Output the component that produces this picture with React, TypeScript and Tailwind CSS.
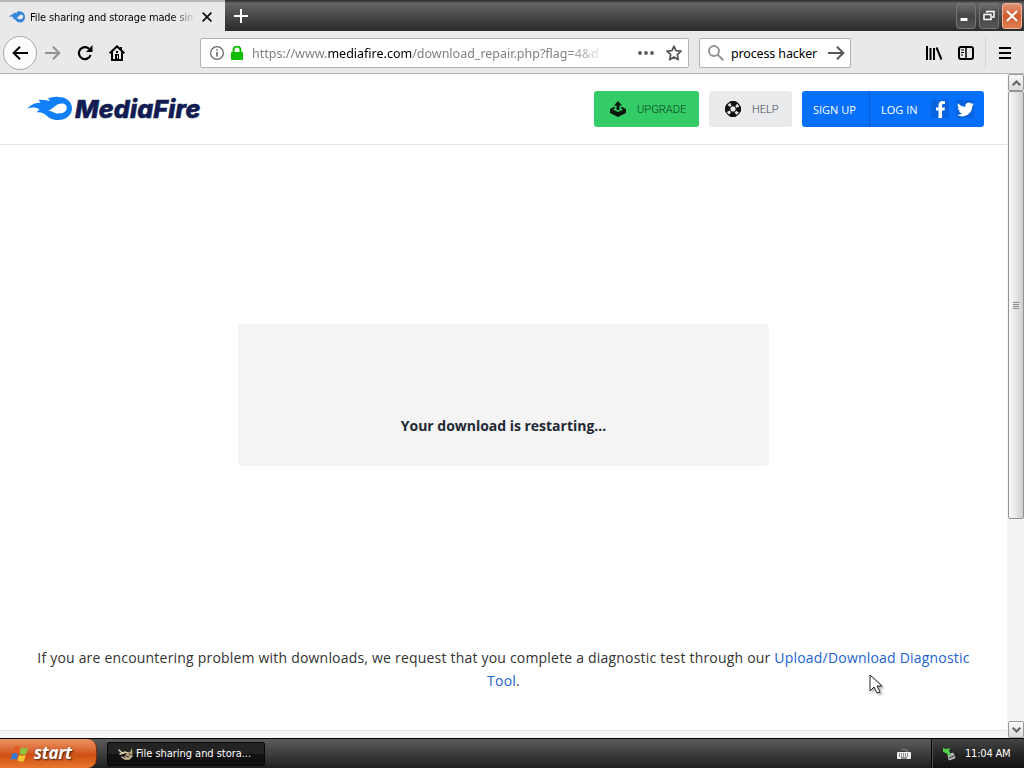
import type { ReactNode } from 'react'

const TAHOMA = "font-['DejaVu_Sans_Condensed','DejaVu_Sans',sans-serif]"
const OPEN = "font-['Open_Sans',sans-serif]"

function Flame({ className }: { className: string }) {
  return (
    <svg viewBox="0 0 43 26" preserveAspectRatio="none" className={className}>
      <path
        fill="currentColor"
        fillRule="evenodd"
        d="M0 13C5 8 9 7 13 7L11 4C17 4 20 5 22 5L20 2C24 2 26 0 30 1C38 1 43 6 43 13C43 20 37 25 30 25C23 25 20 22 17 19C14 17 12 17 9 17L12 14C8 11 4 12 0 13ZM20 15C24 15 26 19 31 18C35 18 38 16 38 12C38 9 35 7 32 8C27 8 25 14 20 15Z"
      />
    </svg>
  )
}

function WindowButton({ close, children }: { close?: boolean; children: ReactNode }) {
  return (
    <div
      className={`flex h-[26px] w-5 items-center justify-center rounded-[3px] border ${
        close
          ? 'border-[#efb49a] bg-linear-to-b from-[#df9778] via-[#cf5a2c] to-[#df8052]'
          : 'border-[#77736f] bg-linear-to-b from-[#6e6e6e] via-[#454545] to-[#555]'
      }`}
    >
      <svg viewBox="0 0 18 24" className="h-6 w-[18px]" fill="none" stroke="#fff" strokeWidth="2">
        {children}
      </svg>
    </div>
  )
}

function TabStrip() {
  return (
    <div className="flex h-[31px] items-start bg-linear-to-b from-[#2a2a2a] from-0% via-[#646464] via-10% to-[#2c2a2a]">
      <div className="flex h-[31px] w-[225px] shrink-0 items-center border-t-2 border-t-[#b5b5b5] bg-[#e9e9e9] pl-[9px]">
        <Flame className="h-[12px] w-4 text-[#3486d6]" />
        <div className="ml-[5px] mt-[-2px] w-[165px] mask-r-from-86% mask-r-to-100%">
          <span className="whitespace-nowrap text-[11px] tracking-[-0.13px] text-black">File sharing and storage made sim</span>
        </div>
        <svg viewBox="0 0 10 10" className="ml-[7px] h-[10px] w-[10px]" stroke="#111" strokeWidth="1.8">
          <path d="M.6.6l8.800 8.800M9.400.6L.6 9.400" />
        </svg>
      </div>
      <svg viewBox="0 0 14 14" className="ml-[9px] mt-[9px] size-[14px]" stroke="#fff" strokeWidth="2">
        <path d="M7 0v14M0 7h14" />
      </svg>
      <div className="ml-auto mr-[2px] mt-[3px] flex gap-[3px]">
        <WindowButton>
          <path d="M3.500 15.500h7" strokeWidth="3" />
        </WindowButton>
        <WindowButton>
          <path d="M7 9V7.500h7V13h-2M4 10.500h7v5H4z" strokeWidth="1.500" />
        </WindowButton>
        <WindowButton close>
          <path d="M4 7l10 10M14 7L4 17" />
        </WindowButton>
      </div>
    </div>
  )
}

function Toolbar() {
  return (
    <div className="flex h-[43px] items-center border-b border-[#b4b4b4] bg-[#e9e9e9] pt-px">
      <div className="ml-[3px] flex size-[34px] shrink-0 items-center justify-center rounded-full border border-[#aaa] bg-[#fcfcfc]">
        <svg viewBox="0 0 16 14" className="h-[14px] w-4" fill="none" stroke="#000" strokeWidth="2">
          <path d="M16 7H1.500M8 .8L1.700 7 8 13.200" />
        </svg>
      </div>
      <svg viewBox="0 0 16 14" className="ml-2 h-[14px] w-4" fill="none" stroke="#929292" strokeWidth="2">
        <path d="M0 7h14.500M8 .8L14.300 7 8 13.200" />
      </svg>
      <svg viewBox="0 0 16 16" className="ml-4 size-4" fill="none" stroke="#000" strokeWidth="2.200">
        <path d="M13.600 10A6 6 0 1 1 12 3.700" />
        <path d="M15.500 0v7H9z" fill="#000" stroke="none" />
      </svg>
      <svg viewBox="0 0 16 16" className="ml-4 size-4">
        <path
          fill="#000"
          fillRule="evenodd"
          d="M8 0L0 7.500 1.300 8.900 2 8.300V16H14V8.300L14.700 8.900 16 7.500 13 4.700V2H11V2.800ZM8 2.700L12 6.500V14H10V9H6V14H4V6.500ZM7 6h2v2H7ZM8 10.500h1v3H8z"
        />
      </svg>
      <div className="ml-[75px] flex h-[30px] w-[489px] shrink-0 items-center rounded-[2px] border border-[#b3b3b3] bg-white">
        <svg viewBox="0 0 14 14" className="ml-[9px] size-[14px]" fill="none" stroke="#666">
          <circle cx="7" cy="7" r="6.400" strokeWidth="1.200" />
          <path d="M7 6v4.500M7 3.200v1.500" strokeWidth="1.600" />
        </svg>
        <svg viewBox="0 0 12 14" className="ml-[7px] h-[14px] w-3">
          <rect y="6" width="12" height="8" rx="1" fill="#12bc00" />
          <path d="M2.500 7V4a3.500 3.500 0 0 1 7 0v3" fill="none" stroke="#12bc00" strokeWidth="2" />
        </svg>
        <div className="ml-[9px] w-[349px] mask-r-from-90% mask-r-to-102%">
          <span className="whitespace-nowrap font-['Noto_Sans',sans-serif] text-[12.500px] text-[#808080]">
            https://www.<span className="text-black">mediafire.com</span>/download_repair.php?flag=4&amp;d
          </span>
        </div>
        <svg viewBox="0 0 16 4" className="ml-[37px] h-1 w-4" fill="#5c5c5c">
          <circle cx="2" cy="2" r="1.900" />
          <circle cx="8" cy="2" r="1.900" />
          <circle cx="14" cy="2" r="1.900" />
        </svg>
        <svg viewBox="0 0 16 16" className="ml-3 size-4" fill="none" stroke="#555" strokeWidth="1.700" strokeLinejoin="round">
          <path d="M8 1.200L10 5.700 15 6.200 11.300 9.600 12.300 14.700 8 12.100 3.700 14.700 4.700 9.600 1 6.200 6 5.700Z" />
        </svg>
      </div>
      <div className="ml-[10px] flex h-[30px] w-[152px] shrink-0 items-center rounded-[2px] border border-[#b3b3b3] bg-white">
        <svg viewBox="0 0 16 16" className="ml-2 size-4" fill="none" stroke="#949494" strokeWidth="2">
          <circle cx="6" cy="6" r="5" />
          <path d="M9.700 9.700L15.300 15.300" />
        </svg>
        <span className="ml-[7px] mt-[3px] w-[88px] whitespace-nowrap font-['Noto_Sans',sans-serif] text-[12.500px] tracking-[-0.14px] text-black">process hacker</span>
        <svg viewBox="0 0 17 14" className="ml-[9px] h-[14px] w-[17px] shrink-0" fill="none" stroke="#555" strokeWidth="2">
          <path d="M0 7h15M9 .8L15.300 7 9 13.200" />
        </svg>
      </div>
      <svg viewBox="0 0 16 14" className="ml-[75px] h-[14px] w-4" stroke="#000" strokeWidth="2">
        <path d="M1 0v14M4.500 2v12M8 2v12M10.500 1.500l5 12" />
      </svg>
      <svg viewBox="0 0 16 14" className="ml-4 h-[14px] w-4" fill="none" stroke="#000" strokeWidth="2">
        <rect x="1" y="1" width="14" height="12" rx="2" />
        <path d="M8 1v12" strokeWidth="1.500" />
        <path d="M3 4h3M3 6.500h3M3 9h2" strokeWidth="1" />
      </svg>
      <div className="ml-[11px] h-8 w-px bg-[#d5d5d5]" />
      <svg viewBox="0 0 12 12" className="ml-[13px] size-3" stroke="#000" strokeWidth="2">
        <path d="M0 1h12M0 6h12M0 11h12" />
      </svg>
    </div>
  )
}

function SiteHeader() {
  return (
    <header className="flex h-[71px] shrink-0 items-center border-b border-[#e3e4e6] pl-[27px] pr-[23px]">
      <Flame className="mt-[-2px] h-[25px] w-[45px] text-[#1180f8]" />
      <span className="ml-[3px] mt-px whitespace-nowrap font-['Inter',sans-serif] text-[25px] font-extrabold italic tracking-[0.18px] text-[#111c52] [-webkit-text-stroke:0.6px_#111c52]">
        MediaFire
      </span>
      <div className="ml-auto flex text-[11px]">
        <div className="flex h-9 w-[105px] items-center rounded-[3px] bg-[#33cc66] pl-4">
          <svg viewBox="0 0 16 16" className="size-4" fill="#06170c">
            <path d="M8 0L12 4.500H9.500V9H6.500V4.500H4Z" />
            <path d="M4.800 5.500L0 8v4l8 4 8-4V8l-4.800-2.500v2L13 8.500 8 11 3 8.500l1.800-1z" />
          </svg>
          <span className="ml-[11px] mt-[2px] whitespace-nowrap font-['Roboto',sans-serif] text-[11.200px] font-light tracking-[-0.05px] text-[#0d3b1c]">UPGRADE</span>
        </div>
        <div className="ml-[10px] flex h-9 w-[83px] items-center rounded-[3px] bg-[#e9eaeb] pl-4">
          <svg viewBox="0 0 16 16" className="size-4">
            <circle cx="8" cy="8" r="5.500" fill="none" stroke="#e9eaeb" strokeWidth="5" />
            <circle cx="8" cy="8" r="5.500" fill="none" stroke="#101010" strokeWidth="5" strokeDasharray="5.900 2.739" strokeDashoffset="2.950" />
            <circle cx="8" cy="8" r="7.300" fill="none" stroke="#101010" strokeWidth="1.300" />
            <circle cx="8" cy="8" r="3.200" fill="#e9eaeb" stroke="#101010" />
          </svg>
          <span className="ml-[11px] mt-[3px] font-['Roboto',sans-serif] font-light text-[#3c4454]">HELP</span>
        </div>
        <div className="ml-[10px] flex h-9 w-[182px] items-center rounded-[3px] bg-[#0670fa] text-white">
          <span className="flex h-9 w-[68px] items-center whitespace-nowrap border-r border-[#0a5bd2] pl-[11px] pt-[2px]">SIGN UP</span>
          <span className="w-[50px] whitespace-nowrap pl-[11px] pt-[2px]">LOG IN</span>
          <div className="ml-[11px] flex size-[18px] items-center justify-center rounded-[3px] bg-[#0663dd]">
            <svg viewBox="0 0 9 17" className="h-[17px] w-[9px]" fill="#fff">
              <path d="M2.500 17V9.500H0V6.500H2.500V4.300C2.500 1.600 4 0 6.600 0L9 .2V3H7.500C6.100 3 6 3.700 6 4.500V6.500H9L8.500 9.500H6V17Z" />
            </svg>
          </div>
          <div className="ml-[7px] flex size-[18px] items-center justify-center rounded-[3px] bg-[#0663dd]">
            <svg viewBox="0 2 24 20" className="h-[15px] w-[17px] shrink-0" fill="#fff">
              <path d="M24 4.600a10 10 0 0 1-2.800.8 5 5 0 0 0 2.100-2.700 10 10 0 0 1-3.100 1.200 4.900 4.900 0 0 0-8.400 4.500A14 14 0 0 1 1.700 3.200a4.900 4.900 0 0 0 1.500 6.500 5 5 0 0 1-2.200-.6 4.900 4.900 0 0 0 3.900 4.900 5 5 0 0 1-2.200.1 4.900 4.900 0 0 0 4.600 3.400A10 10 0 0 1 0 19.500 14 14 0 0 0 21.500 7.100 10 10 0 0 0 24 4.600z" />
            </svg>
          </div>
        </div>
      </div>
    </header>
  )
}

function ScrollButton({ down }: { down?: boolean }) {
  return (
    <div className="flex h-[17px] w-4 shrink-0 items-center justify-center rounded-[2px] border border-[#999] bg-linear-to-b from-[#fafafa] to-[#dadada]">
      <svg viewBox="0 0 9 6" className="h-[6px] w-[9px]" fill="none" stroke="#606060" strokeWidth="2">
        <path d={down ? 'M.8.8L4.500 4.500 8.200.8' : 'M.8 5.200L4.500 1.500 8.200 5.200'} />
      </svg>
    </div>
  )
}

function Scrollbar() {
  return (
    <div className="flex w-[17px] shrink-0 flex-col items-end bg-[#f3f3f3]">
      <ScrollButton />
      <div className="flex h-[428px] w-4 items-center justify-center rounded-[2px] border border-[#929292] bg-linear-to-r from-[#f8f8f8] via-[#e6e6e6] to-[#cfcfcf]">
        <div className="flex flex-col gap-px">
          {[0, 1, 2, 3].map(i => (
            <div key={i} className="h-px w-[6px] bg-[#8b8b8b]" />
          ))}
        </div>
      </div>
      <div className="mt-auto">
        <ScrollButton down />
      </div>
    </div>
  )
}

function Taskbar() {
  return (
    <div className="flex h-[30px] shrink-0 items-stretch border-t border-black bg-linear-to-b from-[#5c5c5c] from-0% via-[#3e3e3e] via-50% to-[#202020]">
      <div className="flex w-[97px] items-center rounded-r-[9px] border-r border-[#78300f] bg-linear-to-b from-[#ed9562] from-0% via-[#ce5013] via-55% to-[#e9782e] pl-[10px]">
        <svg viewBox="0 0 20 18" className="h-[18px] w-5">
          <path d="M4 2q3-2 6 0L8.500 8q-3-2-6 0z" fill="#e55a24" />
          <path d="M11 2.500q3 2 7 0L16 9q-3 1.500-6.500 0z" fill="#8ac642" />
          <path d="M2 9q3-2 6 0l-1.500 6q-3-2-6 0z" fill="#3979d4" />
          <path d="M9 10q3 1.500 6.500 0L14 16q-3 1.500-6.500-.5z" fill="#f4c52c" />
        </svg>
        <span className="ml-[4px] mt-[-2px] font-['Open_Sans',sans-serif] text-[17px] font-bold italic tracking-[-0.3px] text-white [text-shadow:1px_1px_2px_#40200c]">
          start
        </span>
      </div>
      <div className="ml-[10px] mt-[3px] flex h-6 w-[158px] items-center rounded-[2px] border border-[#080808] bg-linear-to-b from-[#232323] from-50% to-[#101010] to-50% pl-[10px] text-[11px] text-white">
        <svg viewBox="0 0 16 14" className="h-[14px] w-4" fill="none" strokeLinecap="round">
          <path d="M1 3l3 3 3-1 3 1M2 7l4-1M4 10l3 2h4l3-3" stroke="#d9cba8" strokeWidth="1.500" />
          <path d="M9 6l3-1 2-4 .5 6-1.500 3-4 2-3-2z" fill="#b8a27f" />
          <path d="M11 7l2 1M8 9l3 1" stroke="#403020" />
        </svg>
        <span className="ml-[2px] mt-px whitespace-nowrap tracking-[-0.04px]">File sharing and stora...</span>
      </div>
      <svg viewBox="0 0 14 13" className="ml-auto mr-5 mt-[9px] h-[13px] w-[14px]">
        <path d="M4 1.500q1.500-1 3 0t3 0V4" stroke="#888" fill="none" />
        <rect x="0" y="4" width="14" height="7" rx="1" fill="#eee" />
        <path d="M2 6h10M2 8h10" stroke="#333" strokeDasharray="1 1" />
        <path d="M4 10h6" stroke="#333" />
      </svg>
      <div className="flex w-[93px] items-center border-l border-black bg-linear-to-b from-[#454545] via-[#272727] to-[#111] pl-[10px] text-[11px] text-white shadow-[inset_1px_0_#4e4e4e]">
        <svg viewBox="0 0 14 14" className="h-[14px] w-[14px]">
          <path d="M6 8l5-2 2 5-6 2z" fill="#aaa" stroke="#ddd" strokeWidth=".7" />
          <path d="M1 1l3 1 4-1-1 3 2 3-2 2-3-3-3-1z" fill="#4fcf4b" />
          <path d="M7 11l5-2" stroke="#333" />
        </svg>
        <span className="ml-[9px] mt-px whitespace-nowrap tracking-[-0.2px]">11:04 AM</span>
      </div>
    </div>
  )
}

export default function App() {
  return (
    <div className={`relative flex h-[768px] w-[1024px] flex-col overflow-hidden bg-white ${TAHOMA}`}>
      <TabStrip />
      <Toolbar />
      <div className="flex min-h-0 flex-1">
        <div className={`flex min-w-0 flex-1 flex-col ${OPEN}`}>
          <SiteHeader />
          <main className="flex flex-1 flex-col items-center">
            <div className="mt-[179px] flex h-[142px] w-[531px] justify-center rounded-[4px] bg-[#f4f4f4] pt-[91px] text-[14px] font-bold text-[#232934]">
              <span className="leading-[22px] tracking-[-0.02px]">Your download is restarting...</span>
            </div>
            <p className="mt-[180px] w-[960px] text-center text-[14px] leading-[23px] tracking-[0.2px] text-[#333]">
              If you are encountering problem with downloads, we request that you complete a diagnostic test through our{' '}
              <span className="text-[#1b62d1]">
                Upload/Download Diagnostic
                <br />
                Tool
              </span>
              .
            </p>
          </main>
          <div className="h-2 border-t border-[#e6e6e6] bg-[#f5f5f5]" />
        </div>
        <Scrollbar />
      </div>
      <Taskbar />
      <svg viewBox="0 0 14 21" className="absolute left-[869px] top-[674px] h-[21px] w-[14px] drop-shadow-[2px_2px_1px_rgba(0,0,0,0.3)]">
        <path d="M1 1v16l4-4 3 6 3-1-3-6h5z" fill="#fff" stroke="#222" />
      </svg>
    </div>
  )
}
